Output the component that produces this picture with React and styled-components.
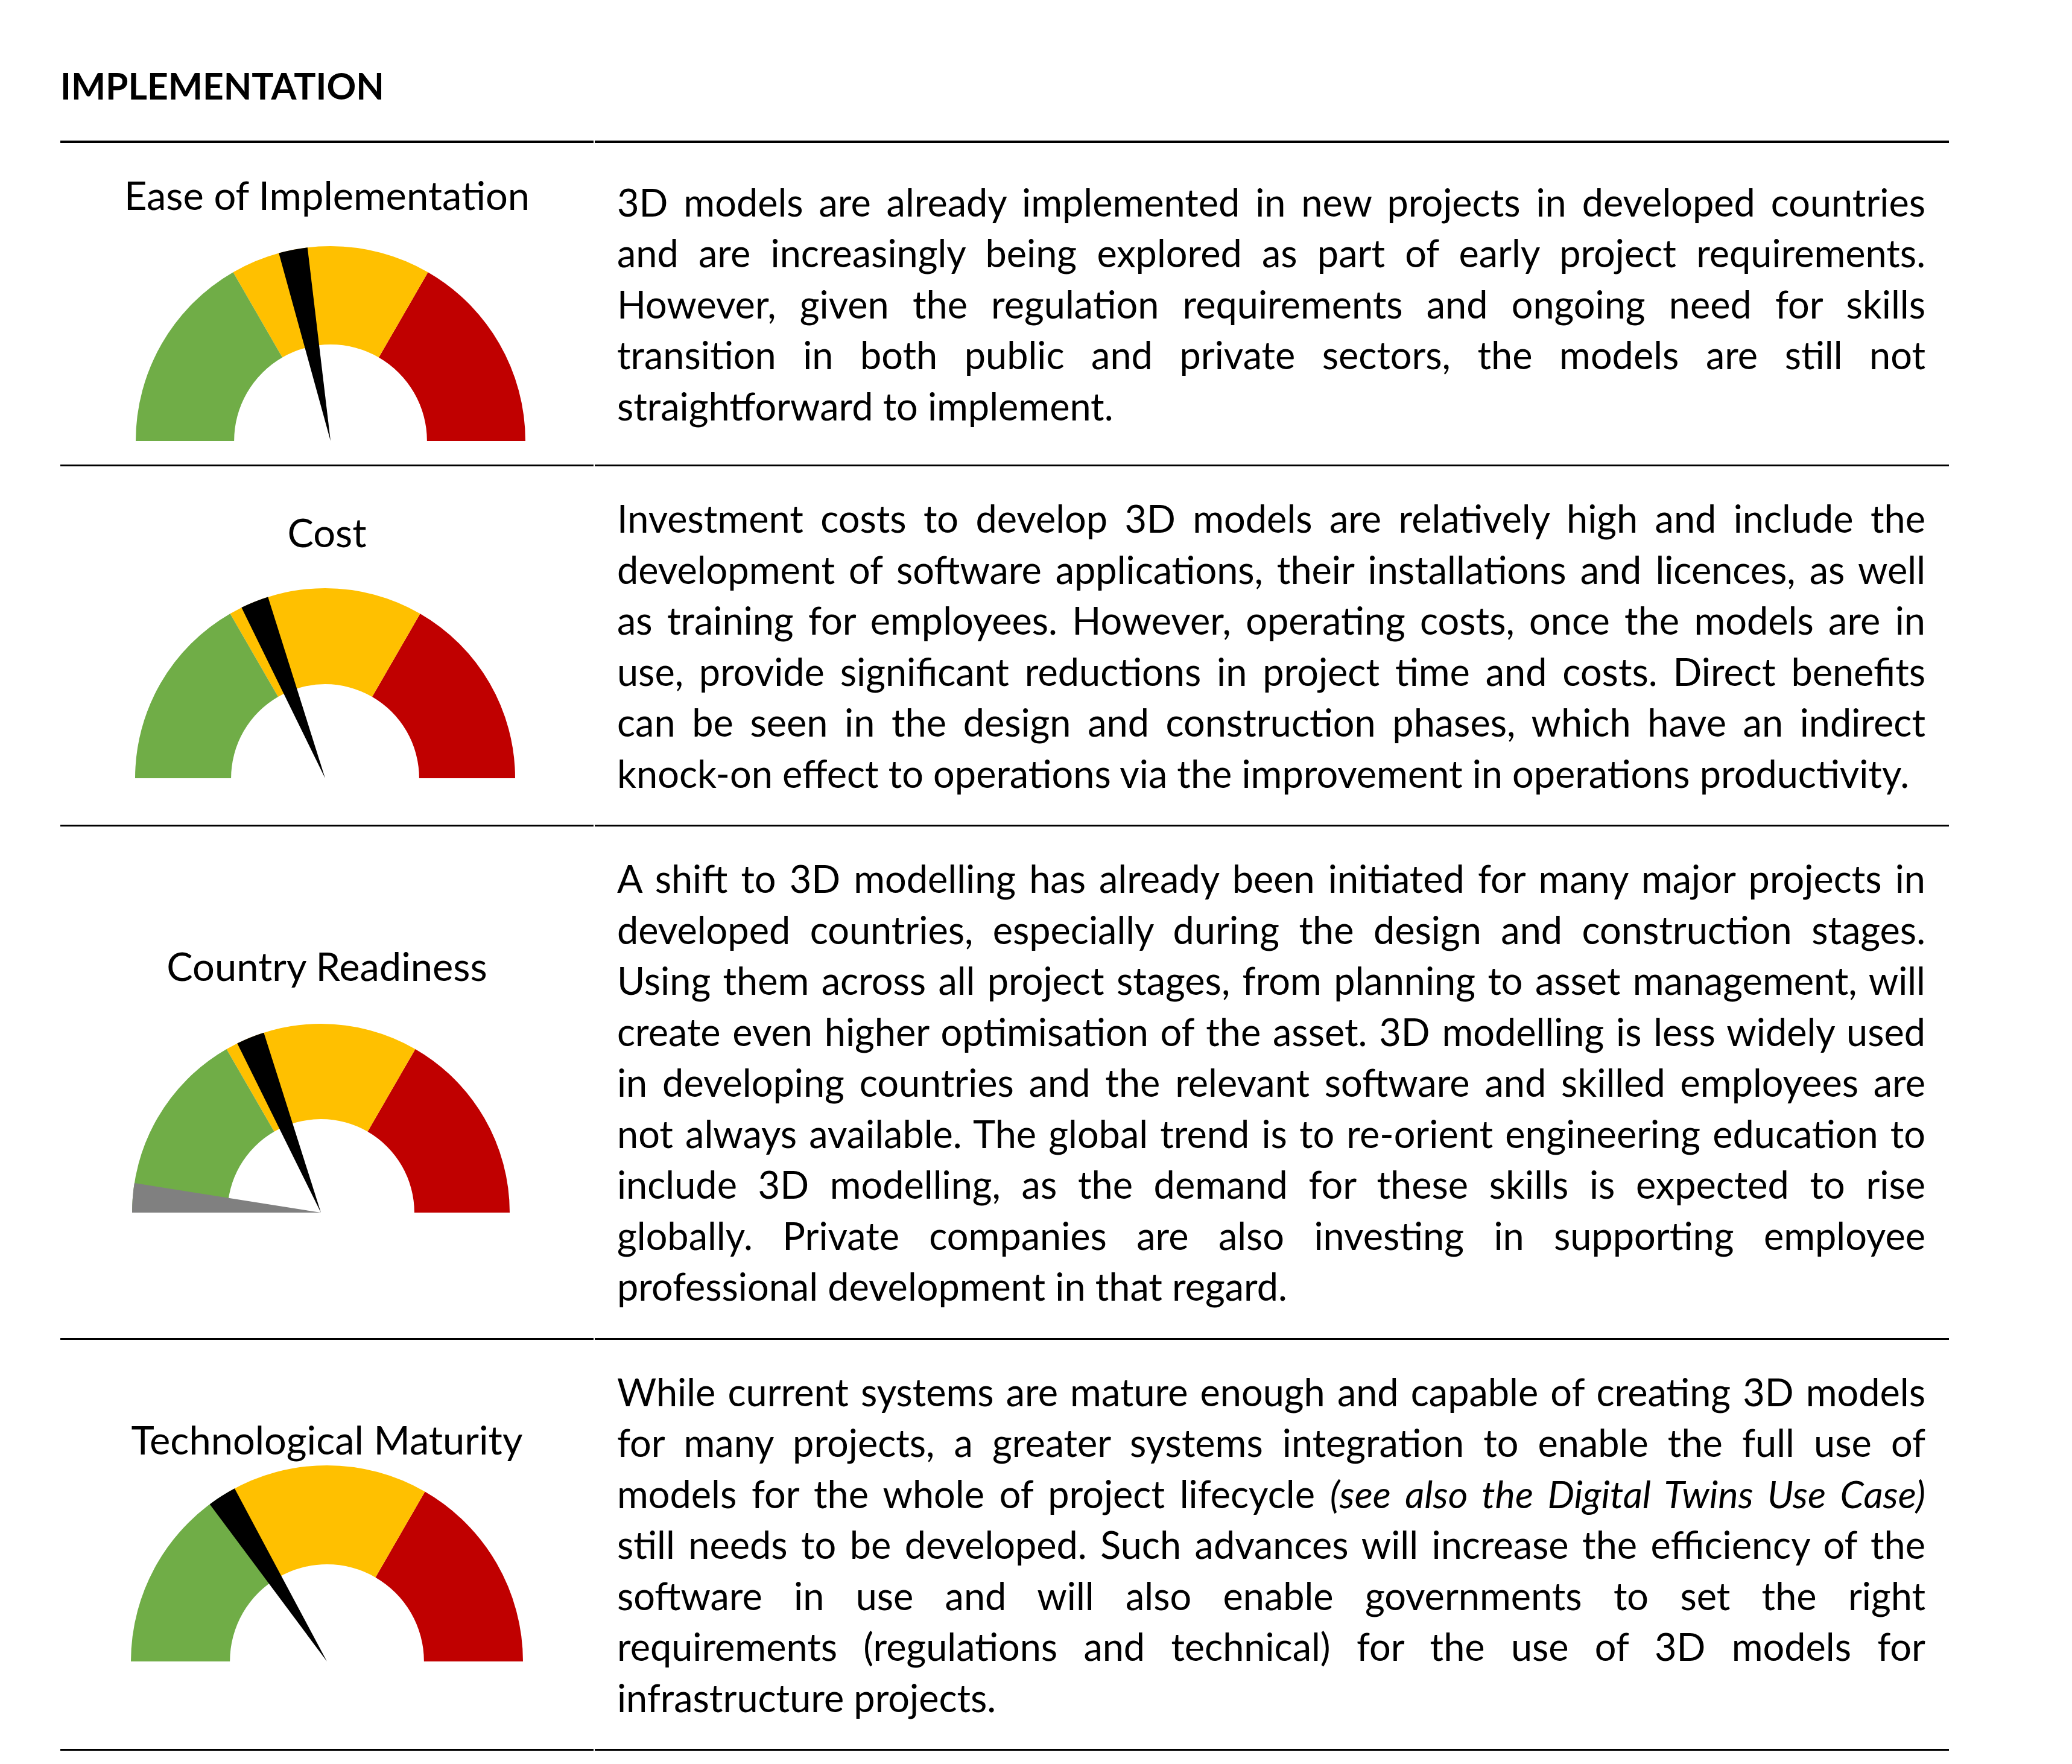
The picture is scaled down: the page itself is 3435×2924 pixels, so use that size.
import React from 'react';
import styled, { createGlobalStyle } from 'styled-components';

const GlobalStyle = createGlobalStyle`
  html, body { margin: 0; padding: 0; background: #fff; }
  body { font-family: Lato, "Liberation Sans", sans-serif; color: #000; }
`;

const Page = styled.main`
  padding: 100px 0 0 100px;
  width: 3131px;
`;

const Title = styled.h2`
  margin: 0 0 48px 0;
  font-size: 60.5px;
  font-weight: 700;
  line-height: 84.5px;
`;

const Table = styled.section`
  display: flex;
  flex-direction: column;
`;

const Row = styled.div`
  display: grid;
  grid-template-columns: 884px 1fr;
  column-gap: 2px;
`;

const Cell = styled.div`
  display: flex;
  flex-direction: column;
  justify-content: center;
  border-bottom: 3px solid #000;
  border-top: ${(p) => (p.$first ? '4px solid #000' : '0')};
`;

const LeftCell = styled(Cell)`
  align-items: center;
  padding: 39px 0;
`;

const TextCell = styled(Cell)`
  padding: 44px 39px 43px 37px;
  font-size: 63px;
  line-height: 84.5px;
`;

const Stack = styled.div`
  display: flex;
  flex-direction: column;
  align-items: center;
  gap: ${(p) => p.$gap - 5}px;
  margin-bottom: ${(p) => p.$shift}px;
`;

const Label = styled.div`
  margin-top: 5px;
  font-size: 65px;
  line-height: 84.5px;
  white-space: nowrap;
`;

const GaugeSvg = styled.svg`
  display: block;
  margin-left: ${(p) => p.$dx * 2}px;
`;

const Line = styled.span`
  display: block;
  white-space: nowrap;
  text-align: justify;
  text-align-last: ${(p) => (p.$last ? 'left' : 'justify')};
`;

const Em = styled.em`
  font-style: italic;
`;

const COLORS = { green: '#70AD47', yellow: '#FFC000', red: '#C00000', gray: '#808080', needle: '#000' };

function pt(c, R, deg) {
  const a = (deg * Math.PI) / 180;
  return [c + R * Math.cos(a), c - R * Math.sin(a)];
}

function ring(c, rOut, rIn, a1, a2) {
  const [x1, y1] = pt(c, rOut, a1);
  const [x2, y2] = pt(c, rOut, a2);
  const [x3, y3] = pt(c, rIn, a2);
  const [x4, y4] = pt(c, rIn, a1);
  return `M${x1} ${y1} A${rOut} ${rOut} 0 0 0 ${x2} ${y2} L${x3} ${y3} A${rIn} ${rIn} 0 0 1 ${x4} ${y4} Z`;
}

function wedge(c, R, a1, a2) {
  const [x1, y1] = pt(c, R, a1);
  const [x2, y2] = pt(c, R, a2);
  return `M${c} ${c} L${x1} ${y1} A${R} ${R} 0 0 0 ${x2} ${y2} Z`;
}

function Gauge({ r, needle, gray, dx }) {
  const rIn = r * 0.495;
  return (
    <GaugeSvg $dx={dx} width={2 * r} height={r} viewBox={`0 0 ${2 * r} ${r}`}>
      <path d={ring(r, r, rIn, 0, 60)} fill={COLORS.red} />
      <path d={ring(r, r, rIn, 60, 120)} fill={COLORS.yellow} />
      <path d={ring(r, r, rIn, 120, 180)} fill={COLORS.green} />
      {gray && <path d={wedge(r, r, gray[0], gray[1])} fill={COLORS.gray} />}
      <path d={wedge(r, r, needle[0], needle[1])} fill={COLORS.needle} />
    </GaugeSvg>
  );
}

const rows = [
  {
    label: 'Ease of Implementation',
    gauge: { r: 323, needle: [96.8, 105.4], dx: 6 },
    gap: 48,
    shift: 0,
    lines: [
      '3D models are already implemented in new projects in developed countries',
      'and are increasingly being explored as part of early project requirements.',
      'However, given the regulation requirements and ongoing need for skills',
      'transition in both public and private sectors, the models are still not',
      'straightforward to implement.',
    ],
  },
  {
    label: 'Cost',
    gauge: { r: 315, needle: [107.5, 116.1], dx: -3 },
    gap: 55,
    shift: 15,
    lines: [
      'Investment costs to develop 3D models are relatively high and include the',
      'development of software applications, their installations and licences, as well',
      'as training for employees. However, operating costs, once the models are in',
      'use, provide significant reductions in project time and costs. Direct benefits',
      'can be seen in the design and construction phases, which have an indirect',
      'knock-on effect to operations via the improvement in operations productivity.',
    ],
  },
  {
    label: 'Country Readiness',
    gauge: { r: 313, needle: [107.6, 116.3], gray: [171, 180], dx: -10 },
    gap: 59,
    shift: 24,
    lines: [
      'A shift to 3D modelling has already been initiated for many major projects in',
      'developed countries, especially during the design and construction stages.',
      'Using them across all project stages, from planning to asset management, will',
      'create even higher optimisation of the asset. 3D modelling is less widely used',
      'in developing countries and the relevant software and skilled employees are',
      'not always available. The global trend is to re-orient engineering education to',
      'include 3D modelling, as the demand for these skills is expected to rise',
      'globally. Private companies are also investing in supporting employee',
      'professional development in that regard.',
    ],
  },
  {
    label: 'Technological Maturity',
    gauge: { r: 325, needle: [118.1, 126.7], dx: 0 },
    gap: 5,
    shift: 27,
    lines: [
      'While current systems are mature enough and capable of creating 3D models',
      'for many projects, a greater systems integration to enable the full use of',
      <>
        models for the whole of project lifecycle <Em>(see also the Digital Twins Use Case)</Em>
      </>,
      'still needs to be developed. Such advances will increase the efficiency of the',
      'software in use and will also enable governments to set the right',
      'requirements (regulations and technical) for the use of 3D models for',
      'infrastructure projects.',
    ],
  },
];

export default function App() {
  return (
    <>
      <GlobalStyle />
      <Page>
        <Title>IMPLEMENTATION</Title>
        <Table>
          {rows.map((row, i) => (
            <Row key={row.label}>
              <LeftCell $first={i === 0}>
                <Stack $gap={row.gap} $shift={row.shift}>
                  <Label>{row.label}</Label>
                  <Gauge {...row.gauge} />
                </Stack>
              </LeftCell>
              <TextCell $first={i === 0}>
                {row.lines.map((line, j) => (
                  <Line key={j} $last={j === row.lines.length - 1}>
                    {line}
                  </Line>
                ))}
              </TextCell>
            </Row>
          ))}
        </Table>
      </Page>
    </>
  );
}
